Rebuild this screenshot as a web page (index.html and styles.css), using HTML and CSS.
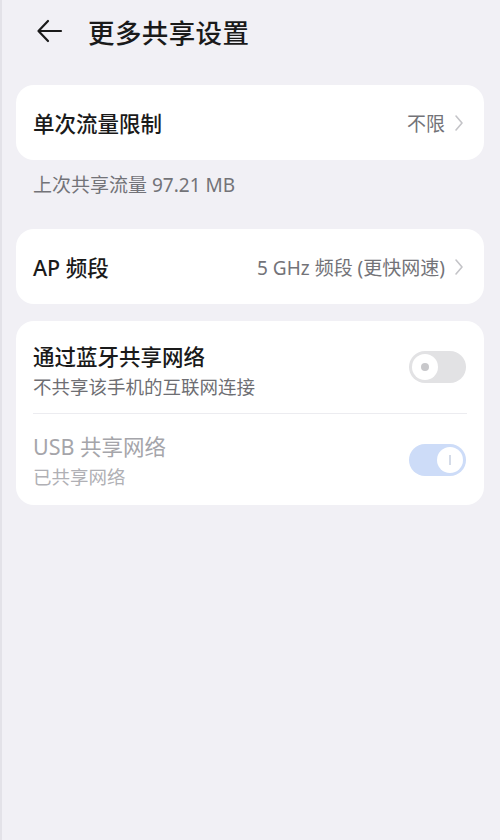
FILE: index.html
```html
<!DOCTYPE html>
<html lang="zh-CN">
<head>
  <meta charset="UTF-8">
  <meta name="viewport" content="width=device-width, initial-scale=1.0">
  <title>更多共享设置</title>
  <link rel="stylesheet" href="styles.css">
</head>
<body>
  <header class="topbar">
    <svg class="back" width="28" height="28" viewBox="0 0 28 28" fill="none" stroke="#1a1a1a" stroke-width="2.2" stroke-linecap="round" stroke-linejoin="round">
      <path d="M25 14H3"/>
      <path d="M12 4L2.5 14L12 24"/>
    </svg>
    <h1>更多共享设置</h1>
  </header>

  <section class="card">
    <div class="row">
      <span class="label">单次流量限制</span>
      <span class="value">不限
        <svg class="chev" width="10" height="18" viewBox="0 0 10 18" fill="none" stroke="#c4c4c8" stroke-width="1.6" stroke-linecap="round" stroke-linejoin="round"><path d="M2 2l6 7-6 7"/></svg>
      </span>
    </div>
  </section>
  <p class="note">上次共享流量 97.21 MB</p>

  <section class="card">
    <div class="row">
      <span class="label">AP 频段</span>
      <span class="value">5 GHz 频段 (更快网速)
        <svg class="chev" width="10" height="18" viewBox="0 0 10 18" fill="none" stroke="#c4c4c8" stroke-width="1.6" stroke-linecap="round" stroke-linejoin="round"><path d="M2 2l6 7-6 7"/></svg>
      </span>
    </div>
  </section>

  <section class="card list">
    <div class="row tall">
      <div class="text">
        <span class="label strong">通过蓝牙共享网络</span>
        <span class="sub">不共享该手机的互联网连接</span>
      </div>
      <span class="switch off"><span class="knob"></span></span>
    </div>
    <div class="row tall disabled">
      <div class="text">
        <span class="label">USB 共享网络</span>
        <span class="sub">已共享网络</span>
      </div>
      <span class="switch on"><span class="knob"></span></span>
    </div>
  </section>
</body>
</html>
```

FILE: styles.css
```css
:root {
  --bg: #f1f0f5;
  --card: #ffffff;
  --text: #1a1a1a;
  --muted: #737378;
  --radius: 18px;
  --font: "Noto Sans", "Noto Sans CJK SC", sans-serif;
}

* {
  box-sizing: border-box;
}

body {
  margin: 0;
  padding: 0 16px 0 14px;
  background: var(--bg);
  font-family: var(--font);
  color: var(--text);
  min-height: 840px;
  border-left: 2px solid #e3e2e8;
}

/* Header */
.topbar {
  display: flex;
  align-items: center;
  height: 62px;
  padding-left: 20px;
  gap: 24px;
  margin-bottom: 23px;
}

.topbar h1 {
  margin: 0;
  font-size: 26.5px;
  font-weight: 500;
  letter-spacing: 0.4px;
}

/* Cards */
.card {
  background: var(--card);
  border-radius: var(--radius);
  padding: 0 17px;
  margin-bottom: 17px;
}

.row {
  display: flex;
  align-items: center;
  justify-content: space-between;
  height: 75px;
}

.label {
  font-size: 21.5px;
  font-weight: 500;
}

.value {
  display: flex;
  align-items: center;
  gap: 9px;
  font-size: 19px;
  color: var(--muted);
  margin-right: 3px;
}

.chev {
  margin-top: 1px;
}

.note {
  margin: -7px 0 0 17px;
  height: 59px;
  font-size: 19px;
  color: var(--muted);
}

/* Toggle list */
.list .row.tall {
  height: 92px;
}

.list .row:first-child .text {
  margin-top: 4px;
}

.list .row + .row {
  border-top: 1px solid #ececf0;
}

.text {
  display: flex;
  flex-direction: column;
  gap: 2px;
}

.text .label {
  font-size: 21.5px;
}

.sub {
  font-size: 18.5px;
  color: #6e6e73;
}

.disabled .label {
  color: #a5a5aa;
  font-weight: 400;
}

.disabled .sub {
  color: #b0b0b5;
}

.switch {
  position: relative;
  width: 57px;
  height: 32px;
  border-radius: 16px;
  margin-right: 1px;
}

.switch .knob {
  position: absolute;
  top: 3px;
  width: 26px;
  height: 26px;
  border-radius: 50%;
  background: #fff;
}

.switch.off {
  background: #e2e2e4;
}

.switch.off .knob {
  left: 3px;
}

.switch.off .knob::after {
  content: "";
  position: absolute;
  left: 9px;
  top: 9px;
  width: 8px;
  height: 8px;
  border-radius: 50%;
  background: #c8c8cb;
}

.switch.on {
  background: #cddcf8;
}

.switch.on .knob {
  right: 3px;
}

.switch.on .knob::after {
  content: "";
  position: absolute;
  left: 12px;
  top: 8px;
  width: 1.5px;
  height: 10px;
  background: #d4dbe8;
}
```
